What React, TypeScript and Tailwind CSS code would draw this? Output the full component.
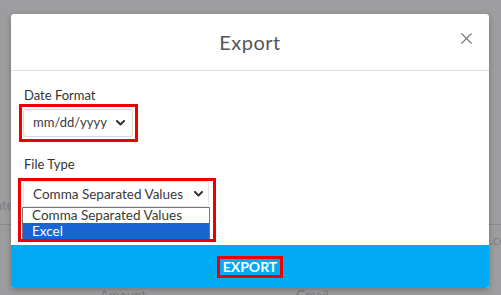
import { X } from "lucide-react";

function Chevron() {
  return (
    <svg width="9" height="6" viewBox="0 0 9 6" fill="none">
      <path d="M1 1 L4.5 4.5 L8 1" stroke="#333" strokeWidth="2" strokeLinecap="round" strokeLinejoin="round" />
    </svg>
  );
}

export default function App() {
  return (
    <div className="relative w-[501px] h-[295px] overflow-hidden bg-[#9d9d9f] font-['Lato',sans-serif]">
      {/* page behind the overlay */}
      <div className="pt-[196px] text-[13px] text-[#808082]">
        <div className="-ml-[14px]">Date</div>
        <div className="mt-[8px] border-b border-[#8a8a8c]" />
        <div className="mt-[6px] flex justify-end -mr-[16px]">.com</div>
        <div className="mt-[36px] flex gap-[150px] pl-[100px] text-[#7d7d80]">
          <span>Amount</span>
          <span>Gmail</span>
        </div>
      </div>

      {/* modal */}
      <div className="absolute left-[11px] top-[14px] w-[478px] h-[274px] bg-white rounded-[3px] shadow-[0_2px_6px_rgba(0,0,0,0.25)] flex flex-col overflow-hidden">
        <div className="relative h-[57px] shrink-0 flex items-center justify-center border-b border-[#dedede]">
          <h2 className="text-[20px] text-[#555] tracking-[0.5px]">Export</h2>
          <button className="absolute right-[13px] top-[15px] text-[#777]">
            <X size={19} strokeWidth={1.4} />
          </button>
        </div>

        <div className="flex-1 pl-[7px] pt-[16px]">
          <label className="block pl-[6px] text-[13px] leading-4 text-[#333]">Date Format</label>
          <div className="mt-px ml-px w-fit border-[3px] border-[#ee0000] pl-px pr-[2px] py-[2px]">
            <div className="w-[110px] h-[28px] border border-[#d9d9d9] rounded-[3px] flex items-center justify-between pl-[9px] pr-[7px] text-[13px] text-[#3a3a3a]">
              <span>mm/dd/yyyy</span>
              <Chevron />
            </div>
          </div>

          <label className="block mt-[14px] pl-[6px] text-[13px] leading-4 text-[#333]">File Type</label>
          <div className="mt-[6px] w-fit border-[3px] border-[#ee0000] pl-[2px] pr-[3px]">
            <div className="w-[186px] h-[26px] border border-[#e4e4e4] rounded-[3px] flex items-center justify-between pl-[9px] pr-[5px] text-[13.5px] text-[#3a3a3a]">
              <span>Comma Separated Values</span>
              <Chevron />
            </div>
            <div className="-ml-px w-[188px] border border-b-0 border-[#767676] text-[13.5px]">
              <div className="h-[15px] leading-[15px] pl-[9px] text-[#3a3a3a]">Comma Separated Values</div>
              <div className="h-[16px] leading-[16px] pl-[9px] bg-[#1a64d2] text-white">Excel</div>
            </div>
          </div>
        </div>

        <div className="h-[43px] shrink-0 bg-[#02a9f4] flex items-center justify-center">
          <button className="border-[3px] border-[#ee0000] px-[3px] text-[14px] leading-4 font-bold text-white">
            EXPORT
          </button>
        </div>
      </div>
    </div>
  );
}
